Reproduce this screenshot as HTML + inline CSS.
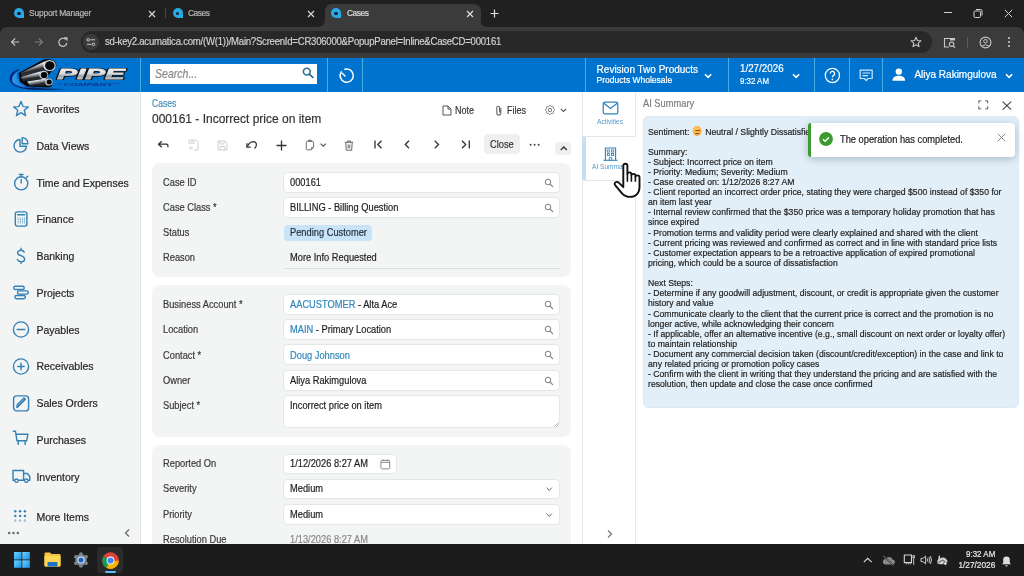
<!DOCTYPE html>
<html><head><meta charset="utf-8"><style>
html,body{margin:0;padding:0;width:1024px;height:576px;overflow:hidden;background:#fff;}
body{position:relative;font-family:"Liberation Sans",sans-serif;}
#w{position:absolute;left:0;top:0;width:1024px;height:576px;overflow:hidden;will-change:transform;}
.t{position:absolute;white-space:pre;line-height:1;-webkit-text-stroke:0.2px currentColor;}
.r{position:absolute;}
.s{position:absolute;overflow:visible;}
.emo{display:inline-block;position:relative;width:10px;height:10px;border-radius:50%;background:radial-gradient(circle at 40% 35%,#ffc75a,#f29a38);vertical-align:-1.5px;margin:0 1.3px 0 1px;}.emo:before{content:'';position:absolute;left:2.5px;top:3.6px;width:5px;height:0.9px;background:#8a4a10;}.emo:after{content:'';position:absolute;left:2.9px;top:6.3px;width:4.2px;height:0.9px;background:#8a4a10;}
</style></head><body>
<div id="w">
<div class="r" style="left:0px;top:0px;width:1024px;height:40px;background:#202020;"></div>
<div class="r" style="left:325px;top:4px;width:155.5px;height:24px;background:#3b3b3b;border-radius:7px 7px 0 0;"></div>
<svg class="s" style="left:317px;top:19px;" width="8" height="8" viewBox="0 0 8 8"><path d="M8 0 V8 H0 Q8 8 8 0Z" fill="#3b3b3b"/></svg>
<svg class="s" style="left:480px;top:19px;" width="8" height="8" viewBox="0 0 8 8"><path d="M0 0 V8 H8 Q0 8 0 0Z" fill="#3b3b3b"/></svg>
<div class="r" style="left:13.6px;top:8.3px;width:10px;height:10px;background:#2aa9e4;border-radius:50% 50% 0 50%;"></div><div class="r" style="left:16.8px;top:11.5px;width:3.8px;height:3.8px;background:#14242e;border-radius:50%;"></div>
<div class="t" style="left:29.40px;top:9.38px;font-size:9.240px;color:#b9b9b9;font-weight:400;transform:scaleX(0.9091);transform-origin:0 0;letter-spacing:-0.2px;">Support Manager</div>
<svg class="s" style="left:148px;top:10px;" width="8" height="8" viewBox="0 0 8 8"><path d="M1 1L7 7M7 1L1 7" stroke="#d6d6d6" stroke-width="1.2"/></svg>
<div class="r" style="left:164.5px;top:8px;width:1px;height:10px;background:#4a4a4a;"></div>
<div class="r" style="left:172.5px;top:8.3px;width:10px;height:10px;background:#2aa9e4;border-radius:50% 50% 0 50%;"></div><div class="r" style="left:175.7px;top:11.5px;width:3.8px;height:3.8px;background:#14242e;border-radius:50%;"></div>
<div class="t" style="left:188.00px;top:9.38px;font-size:9.240px;color:#b9b9b9;font-weight:400;transform:scaleX(0.9091);transform-origin:0 0;letter-spacing:-0.5px;">Cases</div>
<svg class="s" style="left:307px;top:10px;" width="8" height="8" viewBox="0 0 8 8"><path d="M1 1L7 7M7 1L1 7" stroke="#d6d6d6" stroke-width="1.2"/></svg>
<div class="r" style="left:330.8px;top:8.3px;width:10px;height:10px;background:#2aa9e4;border-radius:50% 50% 0 50%;"></div><div class="r" style="left:334.0px;top:11.5px;width:3.8px;height:3.8px;background:#14242e;border-radius:50%;"></div>
<div class="t" style="left:346.50px;top:9.38px;font-size:9.240px;color:#dedede;font-weight:400;transform:scaleX(0.9091);transform-origin:0 0;letter-spacing:-0.5px;">Cases</div>
<svg class="s" style="left:465.5px;top:9.5px;" width="8" height="8" viewBox="0 0 8 8"><path d="M1 1L7 7M7 1L1 7" stroke="#e0e0e0" stroke-width="1.2"/></svg>
<svg class="s" style="left:489.5px;top:9px;" width="9" height="9" viewBox="0 0 9 9"><path d="M4.5 0.5V8.5M0.5 4.5H8.5" stroke="#e0e0e0" stroke-width="1.2"/></svg>
<div class="r" style="left:944px;top:12px;width:7.6px;height:1px;background:#d0d0d0;"></div>
<svg class="s" style="left:972px;top:8px;" width="12" height="10" viewBox="0 0 12 10"><rect x="2" y="3" width="6.5" height="6.5" rx="1.2" fill="none" stroke="#d0d0d0" stroke-width="1"/><path d="M4 1.5H8.5a1.5 1.5 0 0 1 1.5 1.5V7.5" fill="none" stroke="#d0d0d0" stroke-width="1"/></svg>
<svg class="s" style="left:1004px;top:9px;" width="9" height="9" viewBox="0 0 9 9"><path d="M0.8 0.8L8.2 8.2M8.2 0.8L0.8 8.2" stroke="#d0d0d0" stroke-width="1"/></svg>
<div class="r" style="left:0px;top:26.6px;width:1024px;height:31.6px;background:#3b3b3b;border-radius:7px 7px 0 0;"></div>
<svg class="s" style="left:9px;top:36px;" width="12" height="12" viewBox="0 0 12 12"><path d="M10.2 6H2.6M6.2 2.4L2.6 6L6.2 9.6" fill="none" stroke="#c8c8c8" stroke-width="1.2"/></svg>
<svg class="s" style="left:33px;top:36px;" width="12" height="12" viewBox="0 0 12 12"><path d="M1.8 6H9.4M5.8 2.4L9.4 6L5.8 9.6" fill="none" stroke="#7c7c7c" stroke-width="1.2"/></svg>
<svg class="s" style="left:57px;top:36px;" width="12" height="12" viewBox="0 0 12 12"><path d="M9.8 6.8A4 4 0 1 1 8.4 3.2" fill="none" stroke="#c8c8c8" stroke-width="1.2"/><path d="M7.2 1.6H10.2V4.6Z" fill="#c8c8c8" stroke="#c8c8c8" stroke-width="0.6"/></svg>
<div class="r" style="left:80.5px;top:30.8px;width:851px;height:22.4px;background:#282828;border-radius:11.2px;"></div>
<div class="r" style="left:83px;top:34px;width:16px;height:16px;background:#3b3b3b;border-radius:50%;"></div>
<svg class="s" style="left:85px;top:36px;" width="12" height="12" viewBox="0 0 12 12"><circle cx="3.2" cy="3.8" r="1.3" fill="none" stroke="#c8c8c8" stroke-width="1"/><path d="M5.5 3.8H10" stroke="#c8c8c8" stroke-width="1"/><circle cx="8.5" cy="8.3" r="1.3" fill="none" stroke="#c8c8c8" stroke-width="1"/><path d="M2 8.3H6.5" stroke="#c8c8c8" stroke-width="1"/></svg>
<div class="t" style="left:104.80px;top:36.25px;font-size:11.520px;color:#d2d2d2;font-weight:400;transform:scaleX(0.8333);transform-origin:0 0;letter-spacing:-0.3px;">sd-key2.acumatica.com/(W(1))/Main?ScreenId=CR306000&amp;PopupPanel=Inline&amp;CaseCD=000161</div>
<svg class="s" style="left:910px;top:36px;" width="12" height="12" viewBox="0 0 12 12"><path d="M6 1.2L7.4 4.5L10.9 4.8L8.2 7.1L9 10.6L6 8.7L3 10.6L3.8 7.1L1.1 4.8L4.6 4.5Z" fill="none" stroke="#c8c8c8" stroke-width="1.1" stroke-linejoin="round"/></svg>
<svg class="s" style="left:943px;top:37px;" width="14" height="12" viewBox="0 0 14 12"><path d="M6 10H1.5V1.5H8" fill="none" stroke="#c8c8c8" stroke-width="1.1"/><rect x="7" y="1" width="5" height="2.5" fill="#c8c8c8"/><circle cx="8.6" cy="7.2" r="2.2" fill="none" stroke="#c8c8c8" stroke-width="1.1"/><path d="M10.2 8.8L12 10.8" stroke="#c8c8c8" stroke-width="1.2"/></svg>
<div class="r" style="left:967px;top:37px;width:1px;height:10.5px;background:#5a5a5a;"></div>
<svg class="s" style="left:979px;top:36px;" width="13" height="13" viewBox="0 0 13 13"><circle cx="6.5" cy="6.5" r="5.4" fill="none" stroke="#c8c8c8" stroke-width="1.1"/><circle cx="6.5" cy="5.2" r="1.8" fill="none" stroke="#c8c8c8" stroke-width="1"/><path d="M3 10.2Q6.5 7.2 10 10.2" fill="none" stroke="#c8c8c8" stroke-width="1"/></svg>
<svg class="s" style="left:1007px;top:36px;" width="4" height="12" viewBox="0 0 4 12"><circle cx="2" cy="2" r="1.1" fill="#c8c8c8"/><circle cx="2" cy="6" r="1.1" fill="#c8c8c8"/><circle cx="2" cy="10" r="1.1" fill="#c8c8c8"/></svg>
<div class="r" style="left:0px;top:57.6px;width:1024px;height:34px;background:#0073cf;"></div>
<div class="r" style="left:140px;top:57.6px;width:1px;height:34px;background:#45ade2;"></div>
<div class="r" style="left:327px;top:57.6px;width:1px;height:34px;background:#45ade2;"></div>
<div class="r" style="left:362px;top:57.6px;width:1px;height:34px;background:#45ade2;"></div>
<div class="r" style="left:585px;top:57.6px;width:1px;height:34px;background:#45ade2;"></div>
<div class="r" style="left:728px;top:57.6px;width:1px;height:34px;background:#45ade2;"></div>
<div class="r" style="left:814px;top:57.6px;width:1px;height:34px;background:#45ade2;"></div>
<div class="r" style="left:849px;top:57.6px;width:1px;height:34px;background:#45ade2;"></div>
<div class="r" style="left:882px;top:57.6px;width:1px;height:34px;background:#45ade2;"></div>
<div class="r" style="left:150.3px;top:64.1px;width:167px;height:20px;background:#fff;"></div>
<div class="t" style="left:155.30px;top:67.65px;font-size:11.996px;color:#888;font-weight:400;font-style:italic;transform:scaleX(0.8803);transform-origin:0 0;">Search...</div>
<svg class="s" style="left:302px;top:67.3px;" width="12" height="11" viewBox="0 0 12 11"><circle cx="4.8" cy="4.6" r="3.4" fill="none" stroke="#2a6f99" stroke-width="1.6"/><path d="M7.3 7.1L10.8 10.3" stroke="#2a6f99" stroke-width="1.8" stroke-linecap="round"/></svg>
<svg class="s" style="left:337px;top:68px;" width="16" height="16" viewBox="0 0 16 16"><path d="M4.3 3.9A6.6 6.6 0 1 0 7.9 1.3" fill="none" stroke="#fff" stroke-width="1.5" stroke-linecap="round"/><path d="M5.2 5.2L8 8" stroke="#fff" stroke-width="1.5" stroke-linecap="round"/></svg>
<div class="t" style="left:596.60px;top:64.73px;font-size:10.000px;color:#fff;font-weight:400;">Revision Two Products</div>
<div class="t" style="left:596.60px;top:75.70px;font-size:8.500px;color:#fff;font-weight:400;">Products Wholesale</div>
<svg class="s" style="left:704px;top:73px;" width="8.4" height="6" viewBox="0 0 8.4 6"><path d="M1 1.2L4.1 4.3L7.2 1.2" fill="none" stroke="#fff" stroke-width="1.6"/></svg>
<div class="t" style="left:739.50px;top:63.34px;font-size:10.584px;color:#fff;font-weight:400;transform:scaleX(0.9259);transform-origin:0 0;">1/27/2026</div>
<div class="t" style="left:739.50px;top:75.88px;font-size:9.480px;color:#fff;font-weight:400;transform:scaleX(0.8333);transform-origin:0 0;">9:32 AM</div>
<svg class="s" style="left:792.2px;top:73px;" width="8.4" height="6" viewBox="0 0 8.4 6"><path d="M1 1.2L4.1 4.3L7.2 1.2" fill="none" stroke="#fff" stroke-width="1.6"/></svg>
<svg class="s" style="left:824px;top:67.0px;" width="17" height="17" viewBox="0 0 17 17"><circle cx="8.4" cy="8.4" r="7.1" fill="none" stroke="#fff" stroke-width="1.3"/><path d="M6.2 6.6A2.2 2.2 0 1 1 9.3 8.6C8.6 9 8.4 9.3 8.4 10.3" fill="none" stroke="#fff" stroke-width="1.3"/><circle cx="8.4" cy="12.3" r="0.85" fill="#fff"/></svg>
<svg class="s" style="left:858.5px;top:69.0px;" width="15" height="13" viewBox="0 0 15 13"><path d="M1.2 1.2H13.2V9.5H9L7.2 11.6L5.4 9.5H1.2Z" fill="none" stroke="#cfe8fb" stroke-width="1.2" stroke-linejoin="round"/><path d="M3.5 4H11M3.5 6.6H9" stroke="#cfe8fb" stroke-width="1.2"/></svg>
<svg class="s" style="left:892px;top:68px;" width="14" height="14" viewBox="0 0 14 14"><circle cx="6.8" cy="3.6" r="3.2" fill="#fff"/><path d="M0.5 12.8C0.5 9.2 3 7.8 6.8 7.8C10.6 7.8 13.1 9.2 13.1 12.8Z" fill="#fff"/></svg>
<div class="t" style="left:914.40px;top:70.44px;font-size:10.000px;color:#fff;font-weight:400;">Aliya Rakimgulova</div>
<svg class="s" style="left:1005.3px;top:73px;" width="8.4" height="6" viewBox="0 0 8.4 6"><path d="M1 1.2L4.1 4.3L7.2 1.2" fill="none" stroke="#fff" stroke-width="1.6"/></svg>
<svg class="s" style="left:0px;top:57px" width="140" height="35" viewBox="0 57 140 35">
<defs>
<linearGradient id="pg1" gradientUnits="userSpaceOnUse" x1="25" y1="64" x2="27" y2="72"><stop offset="0" stop-color="#6d7379"/><stop offset="0.35" stop-color="#f2f4f6"/><stop offset="0.7" stop-color="#8d949a"/><stop offset="1" stop-color="#2a2e33"/></linearGradient>
<linearGradient id="pg2" gradientUnits="userSpaceOnUse" x1="25" y1="72" x2="26" y2="79"><stop offset="0" stop-color="#5d6369"/><stop offset="0.35" stop-color="#e8ebee"/><stop offset="0.7" stop-color="#7d848a"/><stop offset="1" stop-color="#23272b"/></linearGradient>
<linearGradient id="pg3" gradientUnits="userSpaceOnUse" x1="32" y1="79" x2="33" y2="85"><stop offset="0" stop-color="#5d6369"/><stop offset="0.35" stop-color="#e0e3e6"/><stop offset="0.7" stop-color="#7d848a"/><stop offset="1" stop-color="#23272b"/></linearGradient>
<linearGradient id="tg" x1="0" y1="0" x2="0" y2="1"><stop offset="0" stop-color="#ffffff"/><stop offset="0.5" stop-color="#d5d9dd"/><stop offset="0.62" stop-color="#9aa2a8"/><stop offset="1" stop-color="#e4e7ea"/></linearGradient>
<linearGradient id="sw" x1="0" y1="0" x2="1" y2="0"><stop offset="0" stop-color="#2aa0f0"/><stop offset="0.6" stop-color="#1466d0"/><stop offset="1" stop-color="#0a3fa8"/></linearGradient>
</defs>
<path d="M20 68.5 Q8 72.5 9.5 80 Q12 88 30 89.6 Q48 90.8 66 89 Q46 89.2 30 86.8 Q17 84.5 16.5 77.5 Q16.5 72.5 20 68.5Z" fill="#0a2a80"/>
<path d="M17.5 71 Q10.5 76.5 12.5 82 Q17 88 36 88.6 Q22 85.5 18 80.5 Q15.5 76 18 71Z" fill="url(#sw)"/>
<path d="M24 87.5 Q40 89.5 58 89.3 Q40 90.5 26 89Z" fill="#06184a" opacity="0.8"/>
<path d="M18.5 73 L44 59.3 Q56 58 56.5 66 L51 72 L46 79 L52 81 Q54 88 47 87.5 L27 86.5 L20 82 Z" fill="#07090c"/>
<path d="M20.5 73 L45 61.3 L50.5 71 L22 76.3 Z" fill="url(#pg1)"/>
<path d="M21 77 L41 71.3 L45 79.2 L23 81.3 Z" fill="url(#pg2)"/>
<path d="M27 81.6 L46 78.5 L50 85.6 L30 85.8 Z" fill="url(#pg3)"/>
<ellipse cx="49.5" cy="65.5" rx="6.2" ry="5.6" fill="#d9dde1"/>
<ellipse cx="49.8" cy="65.6" rx="4.8" ry="4.3" fill="#050608"/>
<ellipse cx="43.8" cy="74.9" rx="4.5" ry="4.2" fill="#c9ced3"/>
<ellipse cx="44.1" cy="75" rx="3.3" ry="3.1" fill="#050608"/>
<ellipse cx="48.9" cy="82" rx="3.7" ry="3.6" fill="#c9ced3"/>
<ellipse cx="49.2" cy="82.1" rx="2.6" ry="2.5" fill="#050608"/>
<path d="M62 62.5 Q66 63.5 68 66" fill="none" stroke="#1a4fb5" stroke-width="0.7"/>
<text x="57.3" y="79.4" textLength="67.5" lengthAdjust="spacingAndGlyphs" font-family="Liberation Sans" font-weight="700" font-style="italic" font-size="15" fill="#0b0e12" stroke="#0b0e12" stroke-width="2.2" stroke-linejoin="round">PIPE</text>
<text x="57.3" y="79.4" textLength="67.5" lengthAdjust="spacingAndGlyphs" font-family="Liberation Sans" font-weight="700" font-style="italic" font-size="15" fill="url(#tg)" stroke="url(#tg)" stroke-width="0.8" stroke-linejoin="round">PIPE</text>
<text x="63.5" y="85.9" textLength="49.5" lengthAdjust="spacingAndGlyphs" font-family="Liberation Sans" font-weight="700" font-style="italic" font-size="4.4" fill="#142f8c">COMPANY</text>
<path d="M57.9 83.7H62.2M114.5 83.7H119.2" stroke="#1b3f9c" stroke-width="0.6"/>
</svg>
<div class="r" style="left:0px;top:91.5px;width:140.5px;height:452.5px;background:#f3f4f4;"></div>
<div class="r" style="left:140px;top:91.5px;width:1px;height:452.5px;background:#e2e4e4;"></div>
<div class="t" style="left:36.40px;top:104.01px;font-size:10.500px;color:#262626;font-weight:400;">Favorites</div>
<div class="t" style="left:36.40px;top:140.76px;font-size:10.500px;color:#262626;font-weight:400;">Data Views</div>
<div class="t" style="left:36.40px;top:177.51px;font-size:10.500px;color:#262626;font-weight:400;">Time and Expenses</div>
<div class="t" style="left:36.40px;top:214.26px;font-size:10.500px;color:#262626;font-weight:400;">Finance</div>
<div class="t" style="left:36.40px;top:251.01px;font-size:10.500px;color:#262626;font-weight:400;">Banking</div>
<div class="t" style="left:36.40px;top:287.76px;font-size:10.500px;color:#262626;font-weight:400;">Projects</div>
<div class="t" style="left:36.40px;top:324.51px;font-size:10.500px;color:#262626;font-weight:400;">Payables</div>
<div class="t" style="left:36.40px;top:361.26px;font-size:10.500px;color:#262626;font-weight:400;">Receivables</div>
<div class="t" style="left:36.40px;top:398.01px;font-size:10.500px;color:#262626;font-weight:400;">Sales Orders</div>
<div class="t" style="left:36.40px;top:434.76px;font-size:10.500px;color:#262626;font-weight:400;">Purchases</div>
<div class="t" style="left:36.40px;top:471.51px;font-size:10.500px;color:#262626;font-weight:400;">Inventory</div>
<div class="t" style="left:36.40px;top:511.71px;font-size:10.500px;color:#262626;font-weight:400;">More Items</div>
<svg class="s" style="left:12px;top:99.7px;" width="18" height="18" viewBox="0 0 18 18"><path d="M9 1.5L11.1 6.6L16.3 6.9L12.3 10.3L13.6 15.6L9 12.7L4.4 15.6L5.7 10.3L1.7 6.9L6.9 6.6Z" fill="none" stroke="#3481b6" stroke-width="1.4" stroke-linejoin="round" stroke-linecap="round"/></svg>
<svg class="s" style="left:12px;top:136.45000000000002px;" width="18" height="18" viewBox="0 0 18 18"><path d="M8 3.5A6.3 6.3 0 1 0 14.6 10.2H8Z" fill="none" stroke="#3481b6" stroke-width="1.4" stroke-linejoin="round" stroke-linecap="round"/><path d="M10.2 1.6A5.6 5.6 0 0 1 15.9 7.8H10.2Z" fill="none" stroke="#3481b6" stroke-width="1.4" stroke-linejoin="round" stroke-linecap="round"/></svg>
<svg class="s" style="left:12px;top:173.20000000000002px;" width="18" height="18" viewBox="0 0 18 18"><circle cx="9.2" cy="10.3" r="6.6" fill="none" stroke="#3481b6" stroke-width="1.4" stroke-linejoin="round" stroke-linecap="round"/><path d="M9.2 3.7V1.5M7.3 1.5H11.1M14.3 4.6L15.8 3.2M9.2 6.5V10" fill="none" stroke="#3481b6" stroke-width="1.4" stroke-linejoin="round" stroke-linecap="round"/></svg>
<svg class="s" style="left:12px;top:209.95000000000002px;" width="18" height="18" viewBox="0 0 18 18"><rect x="3.3" y="1.9" width="11.6" height="14.2" rx="2" fill="none" stroke="#3481b6" stroke-width="1.4" stroke-linejoin="round" stroke-linecap="round"/><path d="M5.5 4.8H12.7" fill="none" stroke="#3481b6" stroke-width="1.4" stroke-linejoin="round" stroke-linecap="round"/><path d="M6.2 7.6V14M8.4 7.6V14M10.6 7.6V14M12.6 7.6V14" stroke="#3481b6" stroke-width="0.8" stroke-dasharray="1 0.6"/></svg>
<svg class="s" style="left:12px;top:246.70000000000002px;" width="18" height="18" viewBox="0 0 18 18"><path d="M12.2 5.3C11.5 3.9 10.4 3.3 9 3.3C7 3.3 5.6 4.4 5.6 5.9C5.6 9.3 12.6 8.1 12.6 11.9C12.6 13.6 11 14.7 9 14.7C7.3 14.7 6 14 5.3 12.5M9 1.3V3.3M9 14.7V16.6" fill="none" stroke="#3481b6" stroke-width="1.4" stroke-linejoin="round" stroke-linecap="round"/></svg>
<svg class="s" style="left:12px;top:283.45px;" width="18" height="18" viewBox="0 0 18 18"><rect x="1.7" y="3.3" width="10.5" height="3.2" rx="1.6" fill="none" stroke="#3481b6" stroke-width="1.4" stroke-linejoin="round" stroke-linecap="round"/><rect x="5.5" y="7.9" width="10.8" height="3.2" rx="1.6" fill="none" stroke="#3481b6" stroke-width="1.4" stroke-linejoin="round" stroke-linecap="round"/><rect x="2.9" y="12.5" width="10.5" height="3.2" rx="1.6" fill="none" stroke="#3481b6" stroke-width="1.4" stroke-linejoin="round" stroke-linecap="round"/></svg>
<svg class="s" style="left:12px;top:320.2px;" width="18" height="18" viewBox="0 0 18 18"><circle cx="9" cy="9.5" r="7.6" fill="none" stroke="#3481b6" stroke-width="1.4" stroke-linejoin="round" stroke-linecap="round"/><path d="M5.2 9.5H12.8" fill="none" stroke="#3481b6" stroke-width="1.4" stroke-linejoin="round" stroke-linecap="round"/></svg>
<svg class="s" style="left:12px;top:356.95px;" width="18" height="18" viewBox="0 0 18 18"><circle cx="9" cy="9.5" r="7.6" fill="none" stroke="#3481b6" stroke-width="1.4" stroke-linejoin="round" stroke-linecap="round"/><path d="M5.8 9.5H12.2M9 6.3V12.7" fill="none" stroke="#3481b6" stroke-width="1.4" stroke-linejoin="round" stroke-linecap="round"/></svg>
<svg class="s" style="left:12px;top:393.7px;" width="18" height="18" viewBox="0 0 18 18"><rect x="1.6" y="1.9" width="15" height="15" rx="3" fill="none" stroke="#3481b6" stroke-width="1.4" stroke-linejoin="round" stroke-linecap="round"/><path d="M5.3 13.2L12.9 5.6L12.1 4.8" fill="none" stroke="#3481b6" stroke-width="1.4" stroke-linejoin="round" stroke-linecap="round"/><path d="M5 13.5L6.5 12L13.3 5.2L12 4L5.2 10.8Z" fill="none" stroke="#3481b6" stroke-width="1.4" stroke-linejoin="round" stroke-linecap="round"/></svg>
<svg class="s" style="left:12px;top:430.45px;" width="18" height="18" viewBox="0 0 18 18"><path d="M1.3 1.3H3.5L5 10.8H14.6L15.9 4.3H4.2" fill="none" stroke="#3481b6" stroke-width="1.4" stroke-linejoin="round" stroke-linecap="round"/><circle cx="6.3" cy="13.9" r="0.9" fill="#3481b6"/><circle cx="13.2" cy="13.9" r="0.9" fill="#3481b6"/><path d="M6.2 13.2V10.8M13.2 13.2V10.8" fill="none" stroke="#3481b6" stroke-width="1.4" stroke-linejoin="round" stroke-linecap="round"/></svg>
<svg class="s" style="left:12px;top:467.2px;" width="20" height="18" viewBox="0 0 20 18"><path d="M1 3.5H11.6V13.3H1Z" fill="none" stroke="#3481b6" stroke-width="1.4" stroke-linejoin="round" stroke-linecap="round"/><path d="M11.6 6.5H15.4L17.8 9.5V13.3H11.6" fill="none" stroke="#3481b6" stroke-width="1.4" stroke-linejoin="round" stroke-linecap="round"/><circle cx="4.5" cy="13.7" r="1.7" fill="#f3f4f4" stroke="#3481b6" stroke-width="1.3"/><circle cx="14.3" cy="13.7" r="1.7" fill="#f3f4f4" stroke="#3481b6" stroke-width="1.3"/></svg>
<svg class="s" style="left:14px;top:510px;" width="14" height="12" viewBox="0 0 14 12"><circle cx="1.3" cy="1.3" r="1.2" fill="#3481b6" opacity="1"/><circle cx="6.1" cy="1.3" r="1.2" fill="#3481b6" opacity="1"/><circle cx="10.9" cy="1.3" r="1.2" fill="#3481b6" opacity="1"/><circle cx="1.3" cy="5.8999999999999995" r="1.2" fill="#3481b6" opacity="1"/><circle cx="6.1" cy="5.8999999999999995" r="1.2" fill="#3481b6" opacity="1"/><circle cx="10.9" cy="5.8999999999999995" r="1.2" fill="#3481b6" opacity="1"/><circle cx="1.3" cy="10.5" r="1.2" fill="#3481b6" opacity="0.45"/><circle cx="6.1" cy="10.5" r="1.2" fill="#3481b6" opacity="0.45"/><circle cx="10.9" cy="10.5" r="1.2" fill="#3481b6" opacity="0.45"/></svg>
<svg class="s" style="left:6px;top:530px;" width="16" height="6" viewBox="0 0 16 6"><circle cx="3.2" cy="3" r="1.25" fill="#6a6a6a"/><circle cx="7.5" cy="3" r="1.25" fill="#6a6a6a"/><circle cx="11.8" cy="3" r="1.25" fill="#6a6a6a"/></svg>
<svg class="s" style="left:123px;top:528px;" width="8" height="10" viewBox="0 0 8 10"><path d="M6 1.5L2.5 5L6 8.5" fill="none" stroke="#666" stroke-width="1.2"/></svg>
<div class="r" style="left:141.4px;top:91.5px;width:441px;height:452.5px;background:#fff;"></div>
<div class="t" style="left:151.70px;top:99.26px;font-size:10.320px;color:#4a8db8;font-weight:400;transform:scaleX(0.8333);transform-origin:0 0;">Cases</div>
<div class="t" style="left:151.70px;top:112.53px;font-size:12.600px;color:#333;font-weight:400;transform:scaleX(0.9524);transform-origin:0 0;">000161 - Incorrect price on item</div>
<svg class="s" style="left:442px;top:105px;" width="10" height="11" viewBox="0 0 10 11"><path d="M1 1H6L9 4V10H1Z M6 1V4H9" fill="none" stroke="#555" stroke-width="1"/></svg>
<div class="t" style="left:455.20px;top:104.66px;font-size:10.800px;color:#333;font-weight:400;transform:scaleX(0.8333);transform-origin:0 0;">Note</div>
<svg class="s" style="left:494.5px;top:104.6px;" width="8" height="11" viewBox="0 0 8 11"><path d="M5.8 3V8A2 2 0 0 1 1.8 8V2.6A1.4 1.4 0 0 1 4.6 2.6V7.6" fill="none" stroke="#666" stroke-width="1.1"/></svg>
<div class="t" style="left:507.00px;top:104.76px;font-size:10.800px;color:#333;font-weight:400;transform:scaleX(0.8333);transform-origin:0 0;">Files</div>
<svg class="s" style="left:544.3px;top:104.2px;" width="12" height="12" viewBox="0 0 12 12"><path d="M10.60 6.00L10.53 6.30L10.34 6.57L10.07 6.81L9.79 7.02L9.56 7.21L9.42 7.42L9.37 7.66L9.40 7.96L9.45 8.31L9.47 8.66L9.41 8.99L9.25 9.25L8.99 9.41L8.66 9.47L8.31 9.45L7.96 9.40L7.66 9.37L7.42 9.42L7.21 9.56L7.02 9.79L6.81 10.07L6.57 10.34L6.30 10.53L6.00 10.60L5.70 10.53L5.43 10.34L5.19 10.07L4.98 9.79L4.79 9.56L4.58 9.42L4.34 9.37L4.04 9.40L3.69 9.45L3.34 9.47L3.01 9.41L2.75 9.25L2.59 8.99L2.53 8.66L2.55 8.31L2.60 7.96L2.63 7.66L2.58 7.42L2.44 7.21L2.21 7.02L1.93 6.81L1.66 6.57L1.47 6.30L1.40 6.00L1.47 5.70L1.66 5.43L1.93 5.19L2.21 4.98L2.44 4.79L2.58 4.58L2.63 4.34L2.60 4.04L2.55 3.69L2.53 3.34L2.59 3.01L2.75 2.75L3.01 2.59L3.34 2.53L3.69 2.55L4.04 2.60L4.34 2.63L4.58 2.58L4.79 2.44L4.98 2.21L5.19 1.93L5.43 1.66L5.70 1.47L6.00 1.40L6.30 1.47L6.57 1.66L6.81 1.93L7.02 2.21L7.21 2.44L7.42 2.58L7.66 2.63L7.96 2.60L8.31 2.55L8.66 2.53L8.99 2.59L9.25 2.75L9.41 3.01L9.47 3.34L9.45 3.69L9.40 4.04L9.37 4.34L9.42 4.58L9.56 4.79L9.79 4.98L10.07 5.19L10.34 5.43L10.53 5.70L10.60 6.00Z" fill="none" stroke="#6e6e6e" stroke-width="1"/><circle cx="6" cy="6" r="1.7" fill="none" stroke="#6e6e6e" stroke-width="0.9"/></svg>
<svg class="s" style="left:560px;top:107.7px;" width="7" height="5" viewBox="0 0 7 5"><path d="M0.8 0.8L3.5 3.5L6.2 0.8" fill="none" stroke="#555" stroke-width="1.1"/></svg>
<svg class="s" style="left:157px;top:139px;" width="13" height="11" viewBox="0 0 13 11"><path d="M1.5 5.2H9.6Q10.9 5.2 10.9 6.5V8.2M4.7 2.2L1.5 5.2L4.7 8.2" fill="none" stroke="#333" stroke-width="1.25"/></svg>
<svg class="s" style="left:187px;top:139px;" width="12" height="12" viewBox="0 0 12 12"><path d="M2 5V1H9L11 3V11H7" fill="none" stroke="#cfcfcf" stroke-width="1"/><path d="M4 2.5H7V4.5H4Z" fill="none" stroke="#cfcfcf" stroke-width="0.8"/><path d="M6 9H2.5M4 7.5L2.5 9L4 10.5" fill="none" stroke="#cfcfcf" stroke-width="1"/></svg>
<svg class="s" style="left:216.5px;top:139.5px;" width="11" height="11" viewBox="0 0 11 11"><path d="M1 1H8L10 3V10H1Z" fill="none" stroke="#cfcfcf" stroke-width="1"/><path d="M3 1V4H7V1M3 10V6.5H8V10" fill="none" stroke="#cfcfcf" stroke-width="1"/></svg>
<svg class="s" style="left:245px;top:139.5px;" width="13" height="10" viewBox="0 0 13 10"><path d="M2.3 6.6Q4.6 1.8 8 1.6Q11.3 1.6 11.4 4.8Q11.4 7 9.5 8.4" fill="none" stroke="#333" stroke-width="1.25"/><path d="M1.9 3.2V7.1H5.7" fill="none" stroke="#333" stroke-width="1.25"/></svg>
<svg class="s" style="left:275.5px;top:139.5px;" width="11" height="11" viewBox="0 0 11 11"><path d="M5.5 0.5V10.5M0.5 5.5H10.5" stroke="#333" stroke-width="1.3"/></svg>
<svg class="s" style="left:304.8px;top:139px;" width="10" height="12" viewBox="0 0 10 12"><path d="M2.3 2.3H7.6Q8.6 2.3 8.6 3.3V8.2L6.2 10.8H2.3Q1.3 10.8 1.3 9.8V3.3Q1.3 2.3 2.3 2.3Z" fill="none" stroke="#666" stroke-width="0.95" stroke-linejoin="round"/><path d="M2.6 2.6Q2.9 0.5 4.95 0.5Q7 0.5 7.3 2.6Z" fill="#777"/><path d="M6.2 10.8V8.6Q6.2 8.2 6.6 8.2H8.6Z" fill="#666"/></svg>
<svg class="s" style="left:320px;top:143px;" width="6.5" height="4" viewBox="0 0 6.5 4"><path d="M0.6 0.6L3.2 3.2L5.8 0.6" fill="none" stroke="#555" stroke-width="1.1"/></svg>
<svg class="s" style="left:343.5px;top:139.5px;" width="10" height="11" viewBox="0 0 10 11"><path d="M0.8 2.3H9.2M3.6 2.3V1H6.4V2.3M1.8 2.8L2.3 10.2H7.7L8.2 2.8M4.2 4.5V8.4M5.8 4.5V8.4" fill="none" stroke="#555" stroke-width="0.9"/></svg>
<svg class="s" style="left:373.5px;top:139.5px;" width="9" height="9" viewBox="0 0 9 9"><path d="M1 0.5V8.5M7.5 0.8L3.8 4.5L7.5 8.2" fill="none" stroke="#333" stroke-width="1.3"/></svg>
<svg class="s" style="left:403.3px;top:139.7px;" width="8" height="9" viewBox="0 0 8 9"><path d="M6 0.8L2.3 4.5L6 8.2" fill="none" stroke="#333" stroke-width="1.3"/></svg>
<svg class="s" style="left:432.8px;top:139.7px;" width="8" height="9" viewBox="0 0 8 9"><path d="M1.8 0.8L5.5 4.5L1.8 8.2" fill="none" stroke="#333" stroke-width="1.3"/></svg>
<svg class="s" style="left:461.3px;top:139.6px;" width="10" height="9" viewBox="0 0 10 9"><path d="M1 0.8L4.7 4.5L1 8.2M8.3 0.5V8.5" fill="none" stroke="#333" stroke-width="1.3"/></svg>
<div class="r" style="left:483.5px;top:134.3px;width:36.8px;height:20.2px;background:#efefef;border-radius:4px;"></div>
<div class="t" style="left:490.20px;top:138.77px;font-size:10.788px;color:#333;font-weight:400;transform:scaleX(0.8621);transform-origin:0 0;">Close</div>
<svg class="s" style="left:529px;top:143px;" width="13" height="4" viewBox="0 0 13 4"><circle cx="1.6" cy="1.8" r="1" fill="#444"/><circle cx="5.6" cy="1.8" r="1" fill="#444"/><circle cx="9.6" cy="1.8" r="1" fill="#444"/></svg>
<div class="r" style="left:555.3px;top:142px;width:15.7px;height:12.5px;background:#f0f0f0;border-radius:3px;"></div>
<svg class="s" style="left:559.5px;top:146px;" width="8" height="5" viewBox="0 0 8 5"><path d="M0.8 4L3.8 1L6.8 4" fill="none" stroke="#333" stroke-width="1.3"/></svg>
<div class="r" style="left:151.5px;top:162.8px;width:419.7px;height:113.9px;background:#f3f4f4;border-radius:8px;"></div>
<div class="r" style="left:151.5px;top:285.1px;width:419.7px;height:151.8px;background:#f3f4f4;border-radius:8px;"></div>
<div class="r" style="left:151.5px;top:444.6px;width:419.7px;height:120px;background:#f3f4f4;border-radius:8px;"></div>
<div class="t" style="left:162.80px;top:176.70px;font-size:10.509px;color:#3a3a3a;font-weight:400;transform:scaleX(0.8850);transform-origin:0 0;">Case ID</div>
<div class="t" style="left:162.80px;top:202.00px;font-size:10.509px;color:#3a3a3a;font-weight:400;transform:scaleX(0.8850);transform-origin:0 0;">Case Class *</div>
<div class="t" style="left:162.80px;top:227.30px;font-size:10.509px;color:#3a3a3a;font-weight:400;transform:scaleX(0.8850);transform-origin:0 0;">Status</div>
<div class="t" style="left:162.80px;top:252.40px;font-size:10.509px;color:#3a3a3a;font-weight:400;transform:scaleX(0.8850);transform-origin:0 0;">Reason</div>
<div class="r" style="left:283.4px;top:171.6px;width:276.3px;height:21.1px;background:#fff;border:1px solid #e5e7e7;box-sizing:border-box;border-radius:4px;"></div>
<svg class="s" style="left:543.8px;top:177.5px;" width="10" height="10" viewBox="0 0 10 10"><circle cx="4" cy="4" r="2.8" fill="none" stroke="#7e7e7e" stroke-width="1.0"/><path d="M6.1 6.1L8.6 8.6" stroke="#7e7e7e" stroke-width="1.2" stroke-linecap="round"/></svg>
<div class="t" style="left:289.60px;top:176.70px;font-size:10.509px;color:#1e1e1e;font-weight:400;transform:scaleX(0.8850);transform-origin:0 0;">000161</div>
<div class="r" style="left:283.4px;top:196.9px;width:276.3px;height:21.1px;background:#fff;border:1px solid #e5e7e7;box-sizing:border-box;border-radius:4px;"></div>
<svg class="s" style="left:543.8px;top:202.8px;" width="10" height="10" viewBox="0 0 10 10"><circle cx="4" cy="4" r="2.8" fill="none" stroke="#7e7e7e" stroke-width="1.0"/><path d="M6.1 6.1L8.6 8.6" stroke="#7e7e7e" stroke-width="1.2" stroke-linecap="round"/></svg>
<div class="t" style="left:289.60px;top:202.00px;font-size:10.509px;color:#1e1e1e;font-weight:400;transform:scaleX(0.8850);transform-origin:0 0;">BILLING - Billing Question</div>
<div class="r" style="left:283.9px;top:225.1px;width:87.7px;height:15.8px;background:#c8e4f8;border-radius:4px;"></div>
<div class="t" style="left:289.60px;top:227.30px;font-size:10.509px;color:#25313d;font-weight:400;transform:scaleX(0.8850);transform-origin:0 0;">Pending Customer</div>
<div class="t" style="left:289.60px;top:252.40px;font-size:10.509px;color:#1e1e1e;font-weight:400;transform:scaleX(0.8850);transform-origin:0 0;">More Info Requested</div>
<div class="r" style="left:284px;top:268px;width:275.7px;height:1px;background:#dcdfdf;"></div>
<div class="t" style="left:162.80px;top:298.90px;font-size:10.509px;color:#3a3a3a;font-weight:400;transform:scaleX(0.8850);transform-origin:0 0;">Business Account *</div>
<div class="t" style="left:162.80px;top:324.30px;font-size:10.509px;color:#3a3a3a;font-weight:400;transform:scaleX(0.8850);transform-origin:0 0;">Location</div>
<div class="t" style="left:162.80px;top:349.60px;font-size:10.509px;color:#3a3a3a;font-weight:400;transform:scaleX(0.8850);transform-origin:0 0;">Contact *</div>
<div class="t" style="left:162.80px;top:375.00px;font-size:10.509px;color:#3a3a3a;font-weight:400;transform:scaleX(0.8850);transform-origin:0 0;">Owner</div>
<div class="t" style="left:162.80px;top:400.30px;font-size:10.509px;color:#3a3a3a;font-weight:400;transform:scaleX(0.8850);transform-origin:0 0;">Subject *</div>
<div class="r" style="left:283.4px;top:293.6px;width:276.3px;height:21.1px;background:#fff;border:1px solid #e5e7e7;box-sizing:border-box;border-radius:4px;"></div>
<svg class="s" style="left:543.8px;top:299.5px;" width="10" height="10" viewBox="0 0 10 10"><circle cx="4" cy="4" r="2.8" fill="none" stroke="#7e7e7e" stroke-width="1.0"/><path d="M6.1 6.1L8.6 8.6" stroke="#7e7e7e" stroke-width="1.2" stroke-linecap="round"/></svg>
<div class="r" style="left:283.4px;top:318.95px;width:276.3px;height:21.1px;background:#fff;border:1px solid #e5e7e7;box-sizing:border-box;border-radius:4px;"></div>
<svg class="s" style="left:543.8px;top:324.85px;" width="10" height="10" viewBox="0 0 10 10"><circle cx="4" cy="4" r="2.8" fill="none" stroke="#7e7e7e" stroke-width="1.0"/><path d="M6.1 6.1L8.6 8.6" stroke="#7e7e7e" stroke-width="1.2" stroke-linecap="round"/></svg>
<div class="r" style="left:283.4px;top:344.3px;width:276.3px;height:21.1px;background:#fff;border:1px solid #e5e7e7;box-sizing:border-box;border-radius:4px;"></div>
<svg class="s" style="left:543.8px;top:350.2px;" width="10" height="10" viewBox="0 0 10 10"><circle cx="4" cy="4" r="2.8" fill="none" stroke="#7e7e7e" stroke-width="1.0"/><path d="M6.1 6.1L8.6 8.6" stroke="#7e7e7e" stroke-width="1.2" stroke-linecap="round"/></svg>
<div class="r" style="left:283.4px;top:369.65px;width:276.3px;height:21.1px;background:#fff;border:1px solid #e5e7e7;box-sizing:border-box;border-radius:4px;"></div>
<svg class="s" style="left:543.8px;top:375.55px;" width="10" height="10" viewBox="0 0 10 10"><circle cx="4" cy="4" r="2.8" fill="none" stroke="#7e7e7e" stroke-width="1.0"/><path d="M6.1 6.1L8.6 8.6" stroke="#7e7e7e" stroke-width="1.2" stroke-linecap="round"/></svg>
<div class="t" style="left:289.60px;top:298.90px;font-size:10.509px;color:#1e1e1e;font-weight:400;transform:scaleX(0.8850);transform-origin:0 0;"><span style="color:#2f86ba">AACUSTOMER</span> - Alta Ace</div>
<div class="t" style="left:289.60px;top:324.30px;font-size:10.509px;color:#1e1e1e;font-weight:400;transform:scaleX(0.8850);transform-origin:0 0;"><span style="color:#2f86ba">MAIN</span> - Primary Location</div>
<div class="t" style="left:289.60px;top:349.60px;font-size:10.509px;color:#1e1e1e;font-weight:400;transform:scaleX(0.8850);transform-origin:0 0;"><span style="color:#2f86ba">Doug Johnson</span></div>
<div class="t" style="left:289.60px;top:375.00px;font-size:10.509px;color:#1e1e1e;font-weight:400;transform:scaleX(0.8850);transform-origin:0 0;">Aliya Rakimgulova</div>
<div class="r" style="left:283.4px;top:395.0px;width:276.3px;height:33.1px;background:#fff;border:1px solid #e5e7e7;box-sizing:border-box;border-radius:4px;"></div>
<div class="t" style="left:289.60px;top:400.30px;font-size:10.509px;color:#1e1e1e;font-weight:400;transform:scaleX(0.8850);transform-origin:0 0;">Incorrect price on item</div>
<svg class="s" style="left:553.5px;top:421.5px;" width="5" height="5" viewBox="0 0 5 5"><path d="M4.5 0.5L0.5 4.5M4.5 2.5L2.5 4.5" stroke="#888" stroke-width="0.7"/></svg>
<div class="t" style="left:162.80px;top:458.20px;font-size:10.509px;color:#3a3a3a;font-weight:400;transform:scaleX(0.8850);transform-origin:0 0;">Reported On</div>
<div class="t" style="left:162.80px;top:483.40px;font-size:10.509px;color:#3a3a3a;font-weight:400;transform:scaleX(0.8850);transform-origin:0 0;">Severity</div>
<div class="t" style="left:162.80px;top:508.70px;font-size:10.509px;color:#3a3a3a;font-weight:400;transform:scaleX(0.8850);transform-origin:0 0;">Priority</div>
<div class="t" style="left:162.80px;top:534.00px;font-size:10.509px;color:#3a3a3a;font-weight:400;transform:scaleX(0.8850);transform-origin:0 0;">Resolution Due</div>
<div class="r" style="left:283.4px;top:453.6px;width:113.3px;height:20.9px;background:#fff;border:1px solid #e5e7e7;box-sizing:border-box;border-radius:4px;"></div>
<div class="t" style="left:289.60px;top:458.40px;font-size:10.509px;color:#1e1e1e;font-weight:400;transform:scaleX(0.8850);transform-origin:0 0;">1/12/2026 8:27 AM</div>
<svg class="s" style="left:380.4px;top:458.6px;" width="11" height="11" viewBox="0 0 11 11"><rect x="0.9" y="1.3" width="8.8" height="8.6" rx="1.4" fill="none" stroke="#7a7a7a" stroke-width="0.9"/><path d="M0.9 3.3H9.7" stroke="#7a7a7a" stroke-width="0.9"/><path d="M3 0.4V2M7.6 0.4V2" stroke="#7a7a7a" stroke-width="0.9"/></svg>
<div class="r" style="left:283.4px;top:478.6px;width:276.3px;height:20.9px;background:#fff;border:1px solid #e5e7e7;box-sizing:border-box;border-radius:4px;"></div>
<div class="t" style="left:289.60px;top:483.40px;font-size:10.509px;color:#1e1e1e;font-weight:400;transform:scaleX(0.8850);transform-origin:0 0;">Medium</div>
<div class="r" style="left:283.4px;top:504.1px;width:276.3px;height:20.9px;background:#fff;border:1px solid #e5e7e7;box-sizing:border-box;border-radius:4px;"></div>
<div class="t" style="left:289.60px;top:508.70px;font-size:10.509px;color:#1e1e1e;font-weight:400;transform:scaleX(0.8850);transform-origin:0 0;">Medium</div>
<svg class="s" style="left:545.5px;top:487px;" width="6.5" height="4.5" viewBox="0 0 6.5 4.5"><path d="M0.6 0.6L3.2 3.4L5.9 0.6" fill="none" stroke="#666" stroke-width="1"/></svg>
<svg class="s" style="left:545.5px;top:512.5px;" width="6.5" height="4.5" viewBox="0 0 6.5 4.5"><path d="M0.6 0.6L3.2 3.4L5.9 0.6" fill="none" stroke="#666" stroke-width="1"/></svg>
<div class="t" style="left:289.60px;top:534.00px;font-size:10.509px;color:#888;font-weight:400;transform:scaleX(0.8850);transform-origin:0 0;">1/13/2026 8:27 AM</div>
<div class="r" style="left:582px;top:91.5px;width:54px;height:452.5px;background:#fff;"></div>
<div class="r" style="left:582px;top:91.5px;width:1px;height:452.5px;background:#e6e8e8;"></div>
<div class="r" style="left:635px;top:91.5px;width:1px;height:45.5px;background:#e6e8e8;"></div>
<div class="r" style="left:635px;top:180px;width:1px;height:364px;background:#e6e8e8;"></div>
<div class="r" style="left:582px;top:136px;width:54px;height:1px;background:#e6e8e8;"></div>
<div class="r" style="left:582px;top:179.5px;width:54px;height:1px;background:#e6e8e8;"></div>
<div class="r" style="left:582px;top:137px;width:3.6px;height:42.5px;background:#c9def0;"></div>
<svg class="s" style="left:601.8px;top:101.3px;" width="17" height="14" viewBox="0 0 17 14"><rect x="1.2" y="1.2" width="14.6" height="11.6" rx="1.6" fill="none" stroke="#2f83bd" stroke-width="1.25"/><path d="M1.8 2.2L8.5 7.4L15.2 2.2" fill="none" stroke="#2f83bd" stroke-width="1.25"/></svg>
<div class="t" style="left:597.20px;top:118.10px;font-size:7.920px;color:#5299c8;font-weight:400;transform:scaleX(0.8333);transform-origin:0 0;-webkit-text-stroke:0;">Activities</div>
<svg class="s" style="left:603.2px;top:146.5px;" width="15" height="14" viewBox="0 0 15 14"><path d="M2.4 13.2V1H12.6V13.2" fill="none" stroke="#2f83bd" stroke-width="1.1"/><path d="M0.5 13.3H14.5" stroke="#2f83bd" stroke-width="1.1"/><rect x="4.3" y="2.9" width="2.2" height="2.2" fill="none" stroke="#2f83bd" stroke-width="0.8"/><rect x="8.5" y="2.9" width="2.2" height="2.2" fill="none" stroke="#2f83bd" stroke-width="0.8"/><rect x="4.3" y="6.4" width="2.2" height="2.2" fill="none" stroke="#2f83bd" stroke-width="0.8"/><rect x="8.5" y="6.4" width="2.2" height="2.2" fill="none" stroke="#2f83bd" stroke-width="0.8"/><path d="M6.3 13.2V10.4H8.7V13.2" fill="none" stroke="#2f83bd" stroke-width="0.9"/></svg>
<div class="t" style="left:592.00px;top:163.30px;font-size:7.920px;color:#5299c8;font-weight:400;transform:scaleX(0.8333);transform-origin:0 0;width:37px;overflow:hidden;white-space:nowrap;-webkit-text-stroke:0;">AI Summary</div>
<svg class="s" style="left:606.3px;top:528.5px;" width="8" height="10" viewBox="0 0 8 10"><path d="M2 1.5L5.5 5L2 8.5" fill="none" stroke="#777" stroke-width="1.2"/></svg>
<div class="r" style="left:636.3px;top:91.5px;width:387.7px;height:452.5px;background:#fff;"></div>
<div class="t" style="left:642.60px;top:98.15px;font-size:10.695px;color:#7d7d7d;font-weight:400;transform:scaleX(0.8696);transform-origin:0 0;">AI Summary</div>
<svg class="s" style="left:977.8px;top:99.8px;" width="11" height="10" viewBox="0 0 11 10"><path d="M0.8 3.3V0.8H3.3M7.2 0.8H9.7V3.3M9.7 6.2V8.9H7.2M3.3 8.9H0.8V6.2" fill="none" stroke="#555" stroke-width="0.95"/></svg>
<svg class="s" style="left:1002px;top:100.7px;" width="10" height="9" viewBox="0 0 10 9"><path d="M0.6 0.6L9.2 8.6M9.2 0.6L0.6 8.6" stroke="#444" stroke-width="1.1"/></svg>
<div class="r" style="left:642.8px;top:116.2px;width:376px;height:292.1px;background:#e3eff8;border-radius:6px;box-shadow:inset 0 0 0 1px #dde9f3;"></div>
<div class="t" style="left:647.50px;top:126.38px;font-size:9.710px;color:#222;font-weight:400;transform:scaleX(0.8929);transform-origin:0 0;">Sentiment: <span class="emo"></span> Neutral / Slightly Dissatisfied</div>
<div class="t" style="left:647.50px;top:146.62px;font-size:9.710px;color:#222;font-weight:400;transform:scaleX(0.8929);transform-origin:0 0;">Summary:</div>
<div class="t" style="left:647.50px;top:156.74px;font-size:9.710px;color:#222;font-weight:400;transform:scaleX(0.8929);transform-origin:0 0;">- Subject: Incorrect price on item</div>
<div class="t" style="left:647.50px;top:166.86px;font-size:9.710px;color:#222;font-weight:400;transform:scaleX(0.8929);transform-origin:0 0;">- Priority: Medium; Severity: Medium</div>
<div class="t" style="left:647.50px;top:176.98px;font-size:9.710px;color:#222;font-weight:400;transform:scaleX(0.8929);transform-origin:0 0;">- Case created on: 1/12/2026 8:27 AM</div>
<div class="t" style="left:647.50px;top:187.10px;font-size:9.710px;color:#222;font-weight:400;transform:scaleX(0.8929);transform-origin:0 0;">- Client reported an incorrect order price, stating they were charged $500 instead of $350 for</div>
<div class="t" style="left:647.50px;top:197.22px;font-size:9.710px;color:#222;font-weight:400;transform:scaleX(0.8929);transform-origin:0 0;">an item last year</div>
<div class="t" style="left:647.50px;top:207.34px;font-size:9.710px;color:#222;font-weight:400;transform:scaleX(0.8929);transform-origin:0 0;">- Internal review confirmed that the $350 price was a temporary holiday promotion that has</div>
<div class="t" style="left:647.50px;top:217.46px;font-size:9.710px;color:#222;font-weight:400;transform:scaleX(0.8929);transform-origin:0 0;">since expired</div>
<div class="t" style="left:647.50px;top:227.58px;font-size:9.710px;color:#222;font-weight:400;transform:scaleX(0.8929);transform-origin:0 0;">- Promotion terms and validity period were clearly explained and shared with the client</div>
<div class="t" style="left:647.50px;top:237.70px;font-size:9.710px;color:#222;font-weight:400;transform:scaleX(0.8929);transform-origin:0 0;">- Current pricing was reviewed and confirmed as correct and in line with standard price lists</div>
<div class="t" style="left:647.50px;top:247.82px;font-size:9.710px;color:#222;font-weight:400;transform:scaleX(0.8929);transform-origin:0 0;">- Customer expectation appears to be a retroactive application of expired promotional</div>
<div class="t" style="left:647.50px;top:257.94px;font-size:9.710px;color:#222;font-weight:400;transform:scaleX(0.8929);transform-origin:0 0;">pricing, which could be a source of dissatisfaction</div>
<div class="t" style="left:647.50px;top:278.18px;font-size:9.710px;color:#222;font-weight:400;transform:scaleX(0.8929);transform-origin:0 0;">Next Steps:</div>
<div class="t" style="left:647.50px;top:288.30px;font-size:9.710px;color:#222;font-weight:400;transform:scaleX(0.8929);transform-origin:0 0;">- Determine if any goodwill adjustment, discount, or credit is appropriate given the customer</div>
<div class="t" style="left:647.50px;top:298.42px;font-size:9.710px;color:#222;font-weight:400;transform:scaleX(0.8929);transform-origin:0 0;">history and value</div>
<div class="t" style="left:647.50px;top:308.54px;font-size:9.710px;color:#222;font-weight:400;transform:scaleX(0.8929);transform-origin:0 0;">- Communicate clearly to the client that the current price is correct and the promotion is no</div>
<div class="t" style="left:647.50px;top:318.66px;font-size:9.710px;color:#222;font-weight:400;transform:scaleX(0.8929);transform-origin:0 0;">longer active, while acknowledging their concern</div>
<div class="t" style="left:647.50px;top:328.78px;font-size:9.710px;color:#222;font-weight:400;transform:scaleX(0.8929);transform-origin:0 0;">- If applicable, offer an alternative incentive (e.g., small discount on next order or loyalty offer)</div>
<div class="t" style="left:647.50px;top:338.90px;font-size:9.710px;color:#222;font-weight:400;transform:scaleX(0.8929);transform-origin:0 0;">to maintain relationship</div>
<div class="t" style="left:647.50px;top:349.02px;font-size:9.710px;color:#222;font-weight:400;transform:scaleX(0.8929);transform-origin:0 0;">- Document any commercial decision taken (discount/credit/exception) in the case and link to</div>
<div class="t" style="left:647.50px;top:359.14px;font-size:9.710px;color:#222;font-weight:400;transform:scaleX(0.8929);transform-origin:0 0;">any related pricing or promotion policy cases</div>
<div class="t" style="left:647.50px;top:369.26px;font-size:9.710px;color:#222;font-weight:400;transform:scaleX(0.8929);transform-origin:0 0;">- Confirm with the client in writing that they understand the pricing and are satisfied with the</div>
<div class="t" style="left:647.50px;top:379.38px;font-size:9.710px;color:#222;font-weight:400;transform:scaleX(0.8929);transform-origin:0 0;">resolution, then update and close the case once confirmed</div>
<div class="r" style="left:807.7px;top:123.1px;width:207.1px;height:34.1px;background:#fff;border-radius:4px;box-shadow:0 2px 9px rgba(20,40,60,0.28);"></div>
<div class="r" style="left:807.7px;top:123.1px;width:3px;height:34.1px;background:#3c9a2e;border-radius:4px 0 0 4px;"></div>
<svg class="s" style="left:818.5px;top:132.2px;" width="14" height="14" viewBox="0 0 14 14"><circle cx="7" cy="7" r="6.9" fill="#3b9a30"/><path d="M4 7.2L6.1 9.2L10 5.2" fill="none" stroke="#fff" stroke-width="1.4"/></svg>
<div class="t" style="left:839.80px;top:134.03px;font-size:10.602px;color:#222;font-weight:400;transform:scaleX(0.8772);transform-origin:0 0;">The operation has completed.</div>
<svg class="s" style="left:997px;top:132.6px;" width="9" height="9" viewBox="0 0 9 9"><path d="M0.7 0.7L8.3 8.3M8.3 0.7L0.7 8.3" stroke="#888" stroke-width="1"/></svg>
<svg class="s" style="left:612.8px;top:163px" width="32" height="36.3" viewBox="0 0 32 38" preserveAspectRatio="none">
<path d="M10.3 2.5C10.3 1.4 11.2 0.8 12.4 0.8C13.6 0.8 14.4 1.4 14.4 2.5V11.3C14.6 10.3 15.4 9.8 16.5 9.8C17.6 9.8 18.4 10.5 18.4 11.6V12.6C18.7 11.8 19.5 11.3 20.5 11.3C21.6 11.3 22.4 12.1 22.4 13.2V14.3C22.7 13.5 23.5 13 24.4 13C25.6 13 26.5 13.9 26.5 15.2V25.5C26.5 31.5 22.6 35.5 17 35.5C13.2 35.5 10.9 34 8.6 31.2L2.3 23.5C1.3 22.3 1.5 20.9 2.6 20.2C3.7 19.5 5 19.8 6 20.9L10.3 25.3Z" fill="#fff" stroke="#111" stroke-width="1.9" stroke-linejoin="round"/>
<path d="M14.4 11.3V19.5M18.4 12.6V19.5M22.4 14.3V19.5" stroke="#111" stroke-width="1.6"/>
</svg>
<div class="r" style="left:0px;top:544px;width:1024px;height:32px;background:#1c1c1c;"></div>
<svg class="s" style="left:13.5px;top:552px" width="16" height="16" viewBox="0 0 16 16">
<defs><linearGradient id="wg" x1="0" y1="0" x2="1" y2="1"><stop offset="0" stop-color="#6fd3ff"/><stop offset="1" stop-color="#1a8fe6"/></linearGradient></defs>
<rect x="0" y="0" width="7.5" height="7.5" fill="url(#wg)"/><rect x="8.3" y="0" width="7.5" height="7.5" fill="url(#wg)"/>
<rect x="0" y="8.3" width="7.5" height="7.5" fill="url(#wg)"/><rect x="8.3" y="8.3" width="7.5" height="7.5" fill="url(#wg)"/></svg>
<svg class="s" style="left:43.5px;top:552px" width="17" height="15" viewBox="0 0 17 15">
<path d="M0.5 1.5Q0.5 0.5 1.5 0.5H6L7.5 2H15.5Q16.5 2 16.5 3V13.5Q16.5 14.5 15.5 14.5H1.5Q0.5 14.5 0.5 13.5Z" fill="#f6c342"/>
<path d="M0.5 4H16.5V13.5Q16.5 14.5 15.5 14.5H1.5Q0.5 14.5 0.5 13.5Z" fill="#ffd655"/>
<rect x="3.5" y="10" width="10" height="4.5" rx="0.8" fill="#1e73c8"/></svg>
<svg class="s" style="left:73px;top:552px" width="16" height="16" viewBox="0 0 16 16">
<path d="M6.6 0.5H9.4L9.9 2.6L11.8 3.6L13.8 2.8L15.2 5.2L13.6 6.6V9.4L15.2 10.8L13.8 13.2L11.8 12.4L9.9 13.4L9.4 15.5H6.6L6.1 13.4L4.2 12.4L2.2 13.2L0.8 10.8L2.4 9.4V6.6L0.8 5.2L2.2 2.8L4.2 3.6L6.1 2.6Z" fill="#7a8590"/>
<circle cx="8" cy="8" r="3.6" fill="#e8eef5"/><circle cx="8" cy="8" r="2.6" fill="#1565c0"/></svg>
<div class="r" style="left:97.3px;top:546.5px;width:26.2px;height:26.6px;background:#2b2b2b;border-radius:4px;"></div>
<svg class="s" style="left:101.8px;top:551.5px" width="17" height="17" viewBox="0 0 17 17">
<circle cx="8.5" cy="8.5" r="8.3" fill="#db4437"/>
<path d="M8.5 8.5L1.3 4.35A8.3 8.3 0 0 0 4.35 15.7Z" fill="#0f9d58"/>
<path d="M8.5 8.5L4.35 15.7A8.3 8.3 0 0 0 16.8 8.5Z" fill="#f4b400"/>
<path d="M8.5 8.5L16.8 8.5A8.3 8.3 0 0 0 15.7 4.35Z" fill="#db4437"/>
<circle cx="8.5" cy="8.5" r="3.9" fill="#fff"/><circle cx="8.5" cy="8.5" r="3.1" fill="#4285f4"/></svg>
<div class="r" style="left:105px;top:571px;width:10.6px;height:1.8px;background:#5cc0f5;border-radius:1px;"></div>
<svg class="s" style="left:862.5px;top:556.5px;" width="9.5" height="6" viewBox="0 0 9.5 6"><path d="M0.8 5.2L4.7 1.3L8.7 5.2" fill="none" stroke="#ddd" stroke-width="1.1"/></svg>
<svg class="s" style="left:882px;top:554.5px;" width="13" height="11" viewBox="0 0 13 11"><path d="M3 9.5H10.5A2.5 2.5 0 0 0 10.5 4.5A3.5 3.5 0 0 0 4 4A2.8 2.8 0 0 0 3 9.5Z" fill="#8a8a8a"/><path d="M1.5 1L11.5 10.5" stroke="#1c1c1c" stroke-width="1.6"/><path d="M1.5 1L11.5 10.5" stroke="#aaa" stroke-width="0.8"/></svg>
<svg class="s" style="left:903px;top:554px;" width="13" height="12" viewBox="0 0 13 12"><path d="M1.8 1H8.5V8.6H1.3V1.5Z" fill="none" stroke="#d8d8d8" stroke-width="1.1" stroke-linejoin="round"/><path d="M3 9.8H8.2" stroke="#d8d8d8" stroke-width="0.9" stroke-dasharray="1.2 0.9"/><rect x="9.5" y="1.2" width="2.4" height="2.8" fill="#d8d8d8"/><path d="M10.7 4V10.8" stroke="#d8d8d8" stroke-width="0.9"/><circle cx="10.7" cy="2.6" r="0.55" fill="#1c1c1c"/></svg>
<svg class="s" style="left:920px;top:555px;" width="12" height="10" viewBox="0 0 12 10"><path d="M1 3.4H2.8L5.6 1.2V8.8L2.8 6.6H1Z" fill="none" stroke="#d8d8d8" stroke-width="0.95"/><path d="M7.3 3.3Q8.2 5 7.3 6.7M8.9 2Q10.5 5 8.9 8M10.4 0.9Q12.6 5 10.4 9.1" fill="none" stroke="#d8d8d8" stroke-width="0.9"/></svg>
<svg class="s" style="left:936px;top:554px;" width="12.5" height="12" viewBox="0 0 12.5 12"><path d="M1.5 9.5Q0.8 6.5 2.5 4.5Q2 2 3.5 1Q4.5 3 4 4.5L6 3.5Q9.5 3 10.5 5.5Q12 6.5 11.3 8.5Q9.5 10.5 5 10.2Q2.5 10.2 1.5 9.5Z" fill="#cfcfcf"/><path d="M2.3 8.5L6.5 6.2L9 7.5" fill="none" stroke="#1c1c1c" stroke-width="0.7"/><path d="M7.4 8.8Q8.4 7.8 9.3 8.6Q10.2 7.8 11.2 8.8Q11.2 10 9.3 11.5Q7.4 10 7.4 8.8Z" fill="#f2f2f2" stroke="#1c1c1c" stroke-width="0.5"/></svg>
<div class="t" style="left:965.60px;top:550.35px;font-size:8.800px;color:#e8e8e8;font-weight:400;transform:scaleX(0.9091);transform-origin:0 0;">9:32 AM</div>
<div class="t" style="left:958.40px;top:561.27px;font-size:8.300px;color:#e8e8e8;font-weight:400;">1/27/2026</div>
<svg class="s" style="left:1000.5px;top:554.5px;" width="11" height="11.5" viewBox="0 0 11 11.5"><path d="M5.5 1.5A3.3 3.3 0 0 0 2.2 4.8V7.8L1 9.2H10L8.8 7.8V4.8A3.3 3.3 0 0 0 5.5 1.5Z" fill="#ddd"/><path d="M4.3 10.2A1.2 1.2 0 0 0 6.7 10.2Z" fill="#ddd"/></svg>
</div>
</body></html>
